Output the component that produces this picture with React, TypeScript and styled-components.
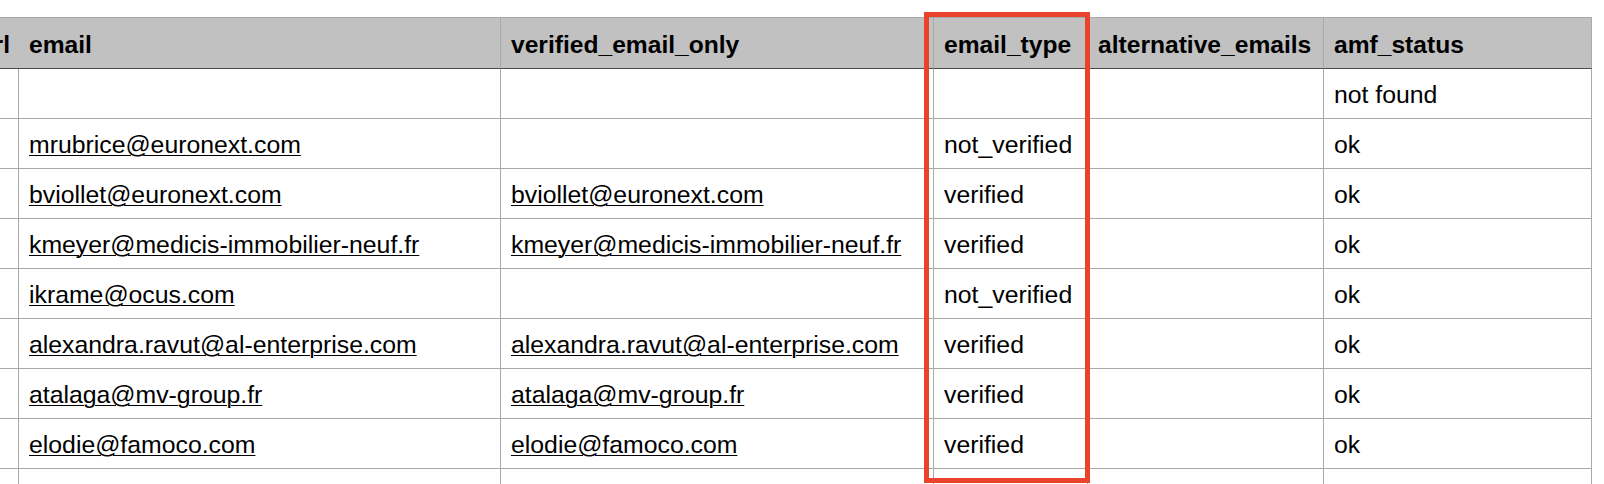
import styled, { createGlobalStyle } from "styled-components";

const GlobalStyle = createGlobalStyle`
  html, body {
    margin: 0;
    padding: 0;
    background: #ffffff;
  }
  body {
    font-family: "Liberation Sans", Arial, Helvetica, sans-serif;
    color: #000;
  }
`

type Row = {
  email: string;
  verified: string;
  type: string;
  alternative: string;
  amf: string;
}

const rows: Row[] = [
  { email: '', verified: '', type: '', alternative: '', amf: 'not found' },
  { email: 'mrubrice@euronext.com', verified: '', type: 'not_verified', alternative: '', amf: 'ok' },
  { email: 'bviollet@euronext.com', verified: 'bviollet@euronext.com', type: 'verified', alternative: '', amf: 'ok' },
  { email: 'kmeyer@medicis-immobilier-neuf.fr', verified: 'kmeyer@medicis-immobilier-neuf.fr', type: 'verified', alternative: '', amf: 'ok' },
  { email: 'ikrame@ocus.com', verified: '', type: 'not_verified', alternative: '', amf: 'ok' },
  { email: 'alexandra.ravut@al-enterprise.com', verified: 'alexandra.ravut@al-enterprise.com', type: 'verified', alternative: '', amf: 'ok' },
  { email: 'atalaga@mv-group.fr', verified: 'atalaga@mv-group.fr', type: 'verified', alternative: '', amf: 'ok' },
  { email: 'elodie@famoco.com', verified: 'elodie@famoco.com', type: 'verified', alternative: '', amf: 'ok' },
  { email: '', verified: '', type: '', alternative: '', amf: '' },
]

const columns = ['url', 'email', 'verified_email_only', 'email_type', 'alternative_emails', 'amf_status']

const App = () => {
  return (
    <Page>
      <GlobalStyle />
      <Sheet>
        {columns.map((col, i) => (
          <HeadCell key={col} $clipped={i === 0}>{col}</HeadCell>
        ))}
        {rows.map((row, i) => (
          <>
            <Cell key={`u${i}`} />
            <Cell key={`e${i}`}>{row.email && <Mail>{row.email}</Mail>}</Cell>
            <Cell key={`v${i}`}>{row.verified && <Mail>{row.verified}</Mail>}</Cell>
            <Cell key={`t${i}`}>{row.type}</Cell>
            <Cell key={`a${i}`}>{row.alternative}</Cell>
            <Cell key={`s${i}`}>{row.amf}</Cell>
          </>
        ))}
      </Sheet>
      <Highlight />
    </Page>
  )
}

const Page = styled.div`
  position: relative;
  width: 1604px;
  height: 484px;
  padding-top: 17px;
  box-sizing: border-box;
  overflow: hidden;
`

const Sheet = styled.div`
  display: grid;
  grid-template-columns: 19px 482px 433px 154px 236px 268px;
  width: 1592px;
  border-top: 1px solid #a9a9a9;
`

const HeadCell = styled.div<{ $clipped?: boolean }>`
  height: 51px;
  box-sizing: border-box;
  display: flex;
  align-items: flex-end;
  justify-content: ${p => p.$clipped ? 'flex-end' : 'flex-start'};
  padding: 0 ${p => p.$clipped ? '10px' : '0'} 9px 10px;
  background: #c0c1c0;
  border-right: 1px solid #a9a9a9;
  border-bottom: 1px solid #4a4a4a;
  font-size: 24.6px;
  line-height: 28px;
  font-weight: bold;
  white-space: nowrap;
  overflow: hidden;
`

const Cell = styled.div`
  height: 50px;
  box-sizing: border-box;
  display: flex;
  align-items: flex-end;
  padding: 0 0 9px 10px;
  border-right: 1px solid #a9a9a9;
  border-bottom: 1px solid #a9a9a9;
  font-size: 24.8px;
  line-height: 28px;
  white-space: nowrap;
  overflow: hidden;
`

const Mail = styled.span`
  text-decoration: underline;
  text-decoration-thickness: 1px;
  text-underline-offset: 2px;
`

const Highlight = styled.div`
  position: absolute;
  left: 924px;
  top: 12px;
  width: 166px;
  height: 471px;
  box-sizing: border-box;
  border: 5px solid #e9432b;
  pointer-events: none;
`

export default App
